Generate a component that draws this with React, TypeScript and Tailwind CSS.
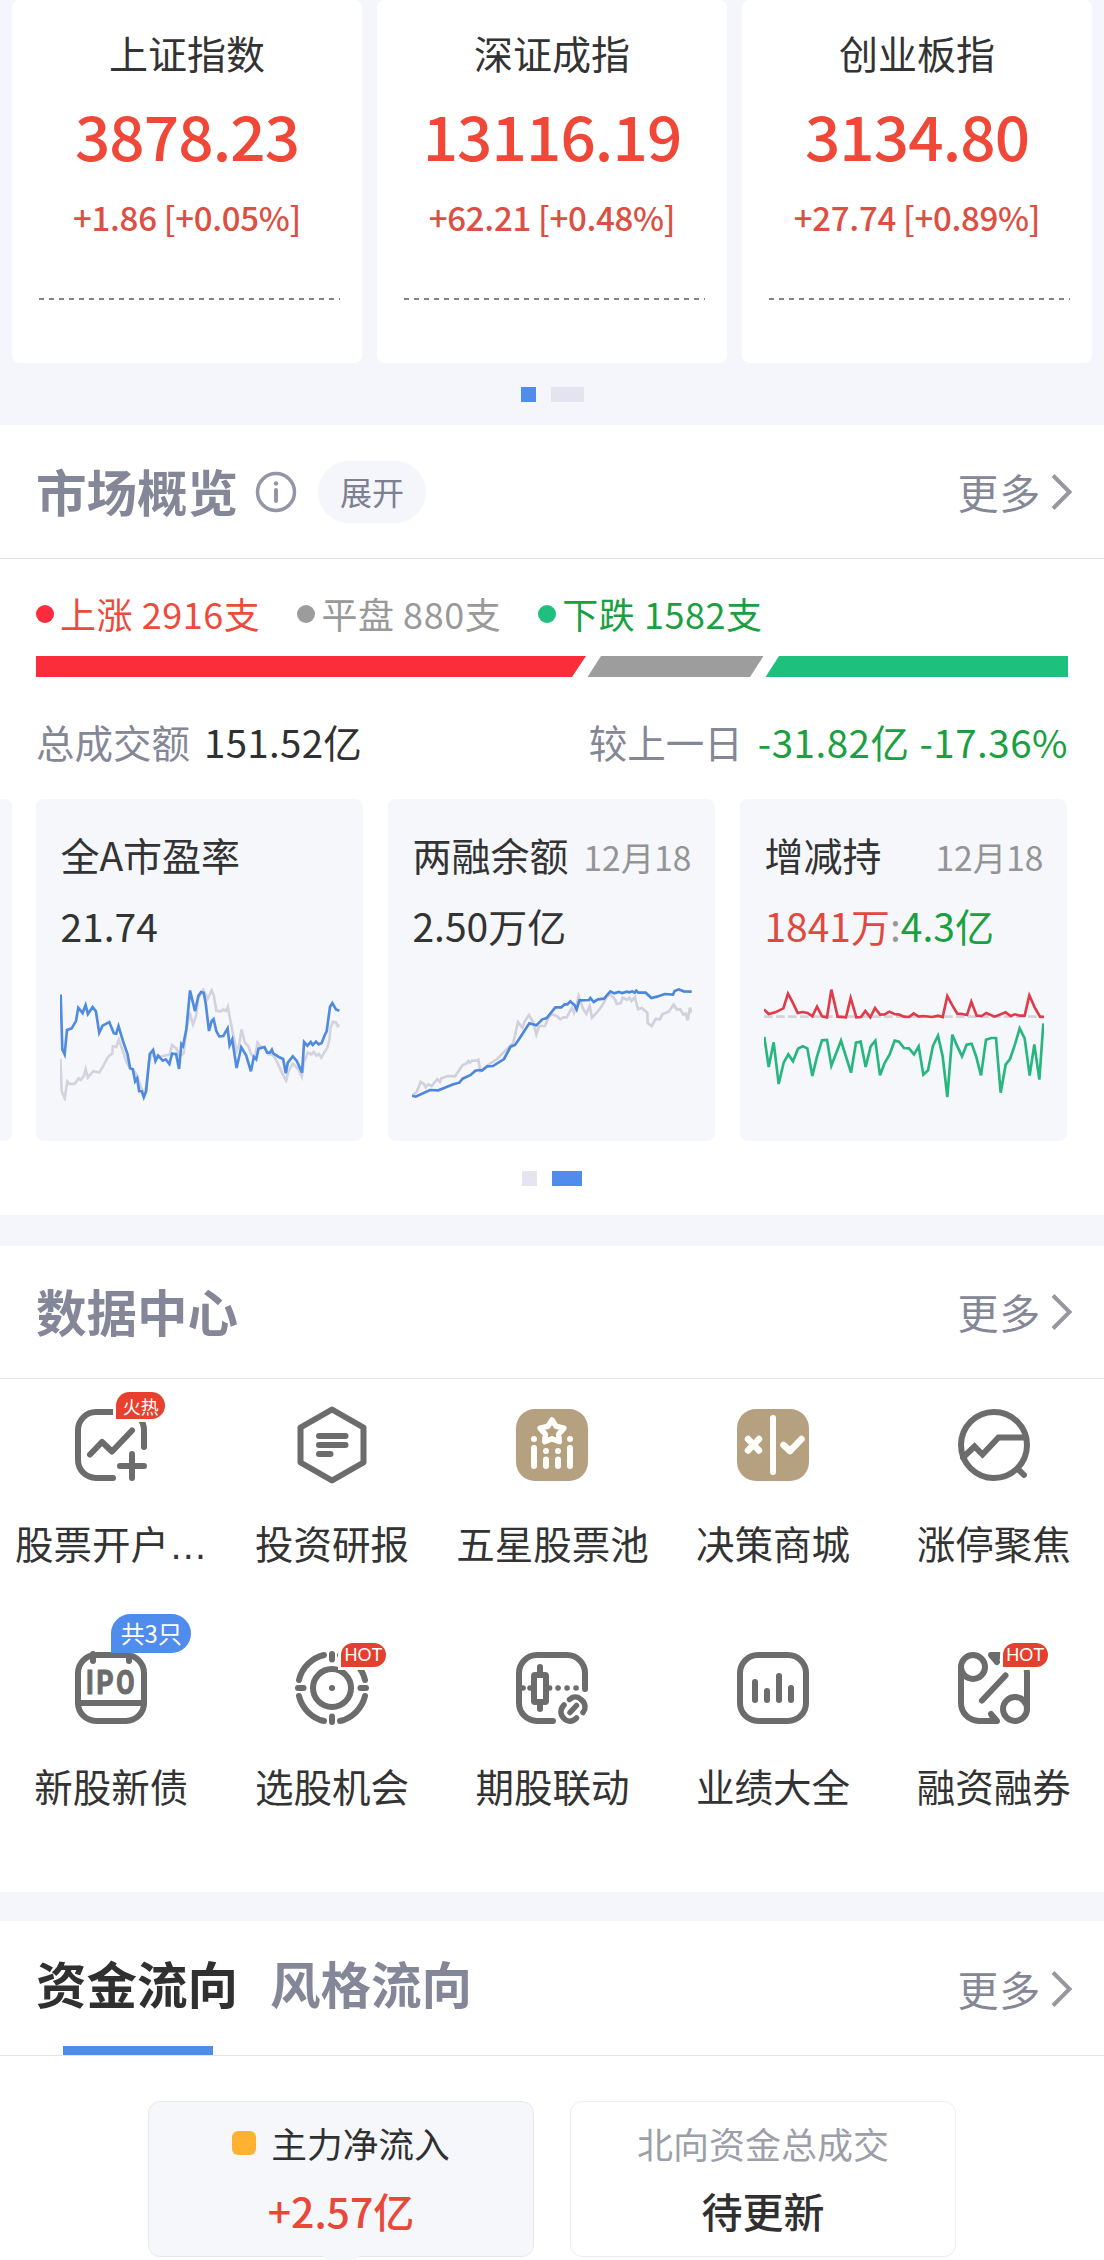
import type { ReactNode } from "react";

const indices = [
  { name: "上证指数", value: "3878.23", change: "+1.86 [+0.05%]" },
  { name: "深证成指", value: "13116.19", change: "+62.21 [+0.48%]" },
  { name: "创业板指", value: "3134.80", change: "+27.74 [+0.89%]" },
];

function IndexCard({ name, value, change }: { name: string; value: string; change: string }) {
  return (
    <div className="flex h-[363px] w-[350px] flex-col items-center rounded-lg bg-white pt-[32px]">
      <div className="text-[39px] leading-[40px] text-[#333]">{name}</div>
      <div className="mt-[30px] text-[62px] leading-[64px] font-medium tracking-[-0.9px] text-[#f04838]">{value}</div>
      <div className="mt-[34px] text-[33px] leading-[34px] font-medium tracking-[-0.3px] text-[#dc5044]">{change}</div>
      <svg className="mt-[64px] ml-[4px] block" width="301" height="2">
        <line x1="0" y1="1" x2="301" y2="1" stroke="#858585" strokeWidth="2" strokeDasharray="5 5" />
      </svg>
    </div>
  );
}

function More() {
  return (
    <div className="flex items-center gap-[10px] text-[41px] leading-[42px] tracking-[0.8px] text-[#848796]">
      <span className="-mt-[2px]">更多</span>
      <svg width="22" height="38" viewBox="0 0 22 38">
        <path d="M2 2.5L18.5 19L2 35.5" fill="none" stroke="#97989f" strokeWidth="4" />
      </svg>
    </div>
  );
}

function Legend({ label, dot, text }: { label: string; dot: string; text: string }) {
  return (
    <div className="flex items-center gap-[6px]">
      <span className={`mt-[2px] h-[18px] w-[18px] rounded-full ${dot}`} />
      <span className={`text-[36px] leading-[36px] tracking-[0.55px] ${text}`}>{label}</span>
    </div>
  );
}

function TrendCard({ title, date, value, children }: { title: string; date?: string; value: ReactNode; children: ReactNode }) {
  return (
    <div className="h-[342px] w-[327px] shrink-0 rounded-lg bg-[#f5f7fb] px-[24px] pt-[35px]">
      <div className="flex h-[40px] items-baseline justify-between whitespace-nowrap leading-[40px]">
        <span className="text-[39px] text-[#333]">{title}</span>
        {date && <span className="text-[33.500px] text-[#949494]">{date}</span>}
      </div>
      <div className="mt-[31px] h-[40px] text-[39px] leading-[40px] text-[#333]">{value}</div>
      <div className="mt-[41px] h-[115px] w-[280px]">{children}</div>
    </div>
  );
}

function PeChart() {
  return (
    <svg width="280" height="115" viewBox="180 620 842 345" fill="none" strokeWidth="8">
      <path stroke="#d3d3df" d="M181 838L185 935L194 957L202 907L208 914L224 914L232 903L236 897L242 902L252 890L257 870L264 895L280 876L298 880L307 865L325 832L337 823L339 801L349 803L357 781L368 812L380 848L390 866L398 870L410 885L424 925L434 944L440 916L447 850L460 817L470 835L490 830L510 826L517 797L530 808L540 832L552 822L560 750L570 700L580 735L589 710L596 655L611 631L624 658L636 633L643 650L650 694L664 696L671 690L679 695L685 682L692 722L701 768L711 815L718 800L726 750L736 790L746 800L755 825L766 835L774 790L782 801L794 804L806 825L820 826L834 850L847 880L860 904L867 876L880 853L897 870L907 892L913 850L925 820L936 825L943 818L951 829L959 824L966 835L975 819L984 805L990 780L994 744L1001 727L1010 729L1015 740L1020 736" />
      <path stroke="#508be0" d="M182 645L187 810L194 825L201 752L215 747L228 725L235 685L248 701L257 677L264 704L278 683L288 696L298 760L308 739L328 728L342 762L349 763L356 740L369 784L383 824L391 867L399 870L406 906L412 897L418 936L426 936L432 954L439 936L450 824L460 812L467 845L475 829L489 844L498 840L509 854L517 823L529 824L538 869L545 794L550 800L560 750L571 633L586 695L596 650L604 638L612 640L618 670L628 755L636 725L642 719L650 755L659 771L671 770L684 747L690 798L698 780L711 866L725 804L740 829L754 876L763 833L770 840L777 808L795 803L803 820L811 820L817 811L821 822L838 833L851 839L859 882L865 850L880 831L892 845L908 880L914 788L924 799L934 788L940 797L950 787L958 795L967 791L975 770L982 755L992 682L999 671L1010 690L1020 694" />
    </svg>
  );
}

function MarginChart() {
  return (
    <svg width="280" height="115" viewBox="126 620 840 345" fill="none" strokeWidth="8">
      <path stroke="#d3d0dd" d="M126 950L140 938L152 908L162 914L167 924L174 915L185 920L202 899L210 908L214 897L234 890L255 891L278 857L290 852L295 845L300 850L306 844L320 844L325 841L331 875L350 860L365 850L380 840L395 825L410 810L430 790L444 728L457 745L465 724L477 707L490 730L499 765L507 740L525 740L535 715L545 705L560 710L571 720L580 714L590 714L606 685L612 700L619 680L626 650L640 690L649 703L659 680L666 715L680 700L692 685L703 667L711 650L721 644L735 660L740 674L752 672L758 655L771 661L779 655L784 665L795 654L804 690L815 686L832 700L833 731L845 740L857 719L870 720L877 705L896 697L911 676L920 690L931 690L940 706L947 703L953 723L960 685L965 700" />
      <path stroke="#4d87db" d="M126 949L137 952L180 932L205 933L250 915L268 910L278 898L302 887L316 874L328 872L336 874L352 861L369 860L402 839L422 802L435 797L447 780L478 732L499 738L517 720L530 716L556 684L574 684L584 675L592 675L601 666L614 678L620 690L628 663L657 662L661 656L671 668L684 660L702 658L721 636L733 642L746 638L757 641L770 637L778 639L787 636L794 640L799 634L805 640L827 640L844 656L861 652L884 644L909 646L914 635L926 630L941 636L965 637" />
    </svg>
  );
}

function HoldingChart() {
  return (
    <svg width="280" height="115" viewBox="120 620 840 345" fill="none" strokeWidth="8">
      <path stroke="#d3d3dd" strokeWidth="8" strokeDasharray="26 10" d="M120 712H960" />
      <path stroke="#df3c4b" d="M120 690L134 704L154 699L178 687L192 643L206 669L221 701L235 698L251 701L265 711L279 682L294 711L309 714L322 631L341 712L366 714L380 656L397 714L411 713L424 695L439 714L453 686L468 706L482 705L496 697L511 704L526 706L540 712L555 713L569 702L584 712L597 710L625 713L642 709L656 713L670 650L685 678L700 703L715 704L729 707L742 667L758 709L773 710L787 701L812 712L845 699L860 710L873 705L888 709L902 709L916 648L932 684L948 712L960 713" />
      <path stroke="#27b77e" d="M121 773L134 863L149 789L164 914L179 850L193 825L207 846L222 808L236 801L250 807L265 890L279 832L294 783L309 782L322 859L351 784L381 880L396 790L410 787L425 863L440 801L454 784L468 888L482 851L497 825L512 784L525 787L540 806L555 807L570 825L584 801L598 886L612 873L627 799L642 769L656 831L670 953L685 766L699 799L714 831L728 796L743 793L756 830L771 888L786 781L802 776L816 776L830 940L845 856L858 839L873 795L887 747L902 777L917 889L931 795L946 901L958 732" />
    </svg>
  );
}

type Badge = { text: string; kind: "fire" | "hot" | "count" };

function BadgeTag({ text, kind }: Badge) {
  if (kind === "count")
    return (
      <span className="absolute -top-[38px] left-[36px] flex h-[39px] w-[80px] items-center justify-center rounded-[20px] rounded-bl-none bg-[#4f8cec] pb-[1px] text-[24px] leading-none whitespace-nowrap text-white">
        {text}
      </span>
    );
  if (kind === "fire")
    return (
      <span className="absolute -top-[17px] left-[41px] flex h-[27px] w-[49px] items-center justify-center rounded-[14px] rounded-bl-none bg-[#e8402e] text-[18px] leading-none whitespace-nowrap text-white ring-3 ring-white">
        {text}
      </span>
    );
  return (
    <span className="absolute -top-[9px] left-[45px] flex h-[24px] w-[45px] items-center justify-center rounded-[12px] rounded-bl-none bg-[#e4402f] font-['Liberation_Sans'] text-[18px] leading-none text-white ring-3 ring-white">
      {text}
    </span>
  );
}

const frame = <rect x="3" y="3" width="66" height="66" rx="18" />;

const tools: { label: string; badge?: Badge; icon: ReactNode }[] = [
  {
    label: "股票开户…",
    badge: { text: "火热", kind: "fire" },
    icon: (
      <>
        <path d="M38 69H21A18 18 0 0 1 3 51V21A18 18 0 0 1 21 3H51A18 18 0 0 1 69 21V38" />
        <path d="M57 45V69M45 57H69M15 45.500L27 33L37 42.500L57 21.500" />
      </>
    ),
  },
  {
    label: "投资研报",
    icon: (
      <>
        <path d="M36 0.500L67.500 18.500V53.500L36 71.500L4.500 53.500V18.500Z" />
        <path d="M23 27H49.500M23 36H49.500M23 45H34.500" />
      </>
    ),
  },
  {
    label: "五星股票池",
    icon: (
      <g stroke="#fffefa">
        <rect width="72" height="72" rx="19" fill="#b5a180" stroke="none" />
        <path strokeWidth="5.500" d="M36 11L40.100 17.300L47.900 19.100L42.700 25.200L43.300 32.600L36 29.800L28.700 32.600L29.300 25.200L24.100 19.100L31.900 17.300Z" />
        <path d="M18 30V30.100M54 30V30.100M30 42V42.100M42 42V42.100" />
        <path d="M18 39V57M54 39V57M30 50.500V57M42 50.500V57" />
      </g>
    ),
  },
  {
    label: "决策商城",
    icon: (
      <g stroke="#fffefa">
        <rect width="72" height="72" rx="19" fill="#b5a180" stroke="none" />
        <path d="M36 9V63" />
        <path strokeWidth="6.500" d="M11 30L22 41.500M22 30L11 41.500M46.500 36L53 42L64.500 30" />
      </g>
    ),
  },
  {
    label: "涨停聚焦",
    icon: (
      <>
        <circle cx="36" cy="36" r="33" />
        <path strokeLinejoin="miter" d="M5 48.500L16.500 37.500L24.500 45.500L40.500 28.500H68" />
        <path d="M60 60L66 66" />
      </>
    ),
  },
  {
    label: "新股新债",
    badge: { text: "共3只", kind: "count" },
    icon: (
      <>
        {frame}
        <path d="M18 2V9M54 3V9" />
        <path d="M3 51H69" />
        <text transform="translate(11 41.5) scale(0.8 1)" letterSpacing="3.5" fontSize="33" fontWeight="700" fontFamily="Roboto" fill="#6c6c6c" strokeWidth="1.200">
          IPO
        </text>
      </>
    ),
  },
  {
    label: "选股机会",
    badge: { text: "HOT", kind: "hot" },
    icon: (
      <>
        <circle cx="36" cy="36" r="19" />
        <circle cx="36" cy="36" r="3" fill="#6c6c6c" stroke="none" />
        <path d="M3 28A34 34 0 0 1 28 3M44 3A34 34 0 0 1 69 28M69 44A34 34 0 0 1 44 69M28 69A34 34 0 0 1 3 44" />
        <path d="M36 2V7.500M36 64.500V70M2 36H7.500M64.500 36H70" />
      </>
    ),
  },
  {
    label: "期股联动",
    icon: (
      <>
        <path d="M69 37V21A18 18 0 0 0 51 3H21A18 18 0 0 0 3 21V51A18 18 0 0 0 21 69H37" />
        <rect x="18" y="23" width="12" height="27" rx="1" />
        <path d="M24 15V22M24 51V57" />
        <path strokeWidth="5.500" d="M7 36H7.100M14 36H14.100M33.500 36H33.600M42 36H42.100M51 36H51.100M60 36H60.100" />
        <path strokeWidth="5.500" d="M53.500 47.500C57 44 61.500 44 65 47.500C70 51.500 70 56.500 67 60.500M48 53C44 57 44 62.500 47.500 66C51.500 70.500 56.500 70 60.500 66M54 60.500L60.500 53.500" />
      </>
    ),
  },
  {
    label: "业绩大全",
    icon: (
      <>
        {frame}
        <path d="M18 30V48M30 39V48M42 24V48M54 36V48" />
      </>
    ),
  },
  {
    label: "融资融券",
    badge: { text: "HOT", kind: "hot" },
    icon: (
      <>
        <circle cx="15" cy="15" r="12" />
        <circle cx="57" cy="57" r="12" />
        <path d="M3 15V51A18 18 0 0 0 21 69H39L33 62M69 57V21A18 18 0 0 0 51 3H33L39 10" />
        <path d="M33 3H42L39 10ZM39 69H33V62Z" fill="#6c6c6c" strokeWidth="3" />
        <path d="M24 48.500L47.500 23.500" />
      </>
    ),
  },
];

function Tool({ label, badge, icon }: { label: string; badge?: Badge; icon: ReactNode }) {
  return (
    <div className="flex h-[243px] flex-col items-center">
      <div className="relative h-[72px] w-[72px]">
        <svg width="72" height="72" viewBox="0 0 72 72" className="overflow-visible" fill="none" stroke="#6c6c6c" strokeWidth="6" strokeLinecap="round" strokeLinejoin="round">
          {icon}
        </svg>
        {badge && <BadgeTag {...badge} />}
      </div>
      <div className="mt-[45px] font-['Liberation_Sans','Noto_Sans_CJK_SC',sans-serif] text-[38.500px] leading-[40px] whitespace-nowrap text-[#333]">
        {label}
      </div>
    </div>
  );
}

export default function App() {
  return (
    <div className="h-[2260px] w-[1104px] overflow-hidden bg-[#f5f6fb] font-['Noto_Sans_CJK_SC',sans-serif]">
      <section className="flex h-[425px] flex-col items-center">
        <div className="flex gap-[15px]">
          {indices.map((item) => (
            <IndexCard key={item.name} {...item} />
          ))}
        </div>
        <div className="mt-[24px] flex gap-[15px]">
          <span className="h-[15px] w-[15px] bg-[#4f8cec]" />
          <span className="h-[15px] w-[33px] bg-[#e4e4f1]" />
        </div>
      </section>

      <section className="h-[790px] bg-white">
        <header className="flex h-[134px] items-center border-b border-[#e3e4e6] pr-[31px] pl-[36px]">
          <h2 className="-mt-[3px] text-[50.500px] leading-none font-bold text-[#838798]">市场概览</h2>
          <svg width="42" height="42" viewBox="0 0 42 42" className="ml-[17px]">
            <circle cx="21" cy="21" r="18.500" fill="none" stroke="#9296a5" strokeWidth="3.500" />
            <path d="M21 19V30" stroke="#9296a5" strokeWidth="4" strokeLinecap="round" />
            <circle cx="21" cy="12.500" r="2.200" fill="#9296a5" />
          </svg>
          <span className="ml-[21px] flex h-[62px] w-[108px] items-center justify-center rounded-full bg-[#f5f6fb] pb-[2px] text-[32px] leading-none text-[#7c8090]">
            展开
          </span>
          <div className="ml-auto">
            <More />
          </div>
        </header>
        <div className="flex h-[97px] items-start gap-[37px] pt-[36px] pl-[36px]">
          <Legend label="上涨 2916支" dot="bg-[#fb2c3c]" text="text-[#ee4a3c]" />
          <Legend label="平盘 880支" dot="bg-[#9c9c9c]" text="text-[#999]" />
          <Legend label="下跌 1582支" dot="bg-[#1ec07e]" text="text-[#1a9f41]" />
        </div>
        <svg width="1032" height="21" className="ml-[36px] block">
          <path d="M0 0H550L536 21H0Z" fill="#fb2d3a" />
          <path d="M565 0H727.500L714 21H551.500Z" fill="#9d9d9d" />
          <path d="M743 0H1032V21H729.500Z" fill="#1ec07e" />
        </svg>
        <div className="flex justify-between px-[36px] pt-[44px] text-[38.500px] leading-[40px]">
          <div className="flex gap-[14px]">
            <span className="text-[#848796]">总成交额</span>
            <span className="tracking-[0.3px] text-[#303030]">151.52亿</span>
          </div>
          <div className="flex gap-[15px] text-[#1a9f41]">
            <span className="text-[#848796]">较上一日</span>
            <span className="tracking-[0.5px] [word-spacing:1px]">-31.82亿 -17.36%</span>
          </div>
        </div>
        <div className="mt-[38px] flex w-full gap-[25px] overflow-hidden">
          <div className="-mr-[0.6px] h-[342px] w-[12px] shrink-0 rounded-r-lg bg-[#f5f7fb]" />
          <TrendCard title="全A市盈率" value="21.74">
            <PeChart />
          </TrendCard>
          <TrendCard title="两融余额" date="12月18" value="2.50万亿">
            <MarginChart />
          </TrendCard>
          <TrendCard
            title="增减持"
            date="12月18"
            value={
              <>
                <span className="text-[#e2493e]">1841万</span>
                <span className="text-[#999]">:</span>
                <span className="text-[#1a9f41]">4.3亿</span>
              </>
            }
          >
            <HoldingChart />
          </TrendCard>
        </div>
        <div className="mt-[30px] flex justify-center gap-[15px]">
          <span className="h-[15px] w-[15px] bg-[#e5e4f1]" />
          <span className="h-[15px] w-[30px] bg-[#4f8cec]" />
        </div>
      </section>

      <section className="mt-[31px] h-[646px] bg-white">
        <header className="flex h-[133px] items-center justify-between border-b border-[#e3e4e6] pr-[31px] pl-[36px]">
          <h2 className="-mt-[4px] text-[50.500px] leading-none font-bold text-[#838798]">数据中心</h2>
          <More />
        </header>
        <div className="ml-[1px] grid grid-cols-5 pt-[30px]">
          {tools.map((tool) => (
            <Tool key={tool.label} {...tool} />
          ))}
        </div>
      </section>

      <section className="mt-[29px] h-[339px] bg-white">
        <header className="flex h-[135px] items-start justify-between border-b border-[#e3e4e6] pr-[31px] pl-[36px]">
          <div className="flex h-full gap-[32px] pt-[36px] text-[50.500px] leading-[50px] font-bold">
            <div className="flex h-full flex-col items-center justify-between text-[#303030]">
              资金流向
              <span className="ml-[2px] h-[9px] w-[150px] bg-[#4f8cec]" />
            </div>
            <div className="text-[#838798]">风格流向</div>
          </div>
          <div className="pt-[48px]">
            <More />
          </div>
        </header>
        <div className="flex justify-center gap-[36px] pt-[45px]">
          <div className="relative flex h-[156px] w-[386px] flex-col items-center rounded-xl border border-[#e6e8eb] bg-[#f5f7fb] pt-[22px]">
            <div className="flex items-center gap-[15px] text-[35.700px] leading-[38px] text-[#303030]">
              <span className="h-[24px] w-[24px] rounded-md bg-[#ffb232]" />
              主力净流入
            </div>
            <div className="mt-[27px] text-[41px] leading-[42px] font-medium text-[#e8483a]">+2.57亿</div>
            <svg className="absolute -bottom-[5px] left-[173px]" width="38" height="6">
              <path d="M0 0H38L33 6H5Z" fill="#f5f7fb" />
            </svg>
          </div>
          <div className="flex h-[156px] w-[386px] flex-col items-center rounded-xl border border-[#ecedf0] bg-white pt-[22px]">
            <div className="text-[36px] leading-[38px] text-[#9c9fa9]">北向资金总成交</div>
            <div className="mt-[27px] text-[41px] leading-[42px] font-medium text-[#303030]">待更新</div>
          </div>
        </div>
      </section>
    </div>
  );
}
